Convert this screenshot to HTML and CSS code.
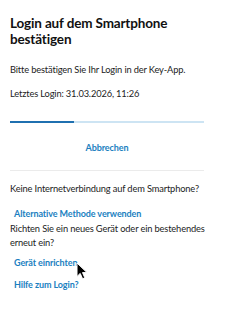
FILE: index.html
```html
<!DOCTYPE html>
<html lang="de">
<head>
<meta charset="utf-8">
<link rel="stylesheet" href="styles.css">
</head>
<body>
<div class="page">
  <h1 class="title">Login auf dem Smartphone bestätigen</h1>
  <p class="text first">Bitte bestätigen Sie Ihr Login in der Key-App.</p>
  <p class="text second">Letztes Login: 31.03.2026, 11:26</p>
  <div class="progress"><div class="progress-fill" style="width:33%"></div></div>
  <div class="cancel-row"><a class="link" href="#">Abbrechen</a></div>
  <div class="divider"></div>
  <p class="text q">Keine Internetverbindung auf dem Smartphone?</p>
  <a class="link indent alt" href="#">Alternative Methode verwenden</a>
  <p class="text q2">Richten Sie ein neues Gerät oder ein bestehendes erneut ein?</p>
  <div class="device-row">
    <a class="link indent" href="#">Gerät einrichten</a>
    <svg class="cursor" width="12" height="18" viewBox="0 0 12 18"><path d="M1 1 L1 14.5 L4.2 11.4 L6.6 16.8 L8.8 15.8 L6.5 10.6 L11 10.6 Z" fill="#000" stroke="#fff" stroke-width="1" stroke-linejoin="round"/></svg>
  </div>
  <a class="link indent help" href="#">Hilfe zum Login?</a>
</div>
</body>
</html>
```
FILE: styles.css
```css
html, body { margin: 0; padding: 0; background: #fff; }
body { font-family: Lato, "Noto Sans", sans-serif; color: #1c1c1c; }
.page { width: 194px; padding: 15px 10px 0 10px; display: flex; flex-direction: column; }
.title { font-size: 13.5px; line-height: 16px; font-weight: 700; margin: 0; color: #111; letter-spacing: -0.15px; }
.text { font-size: 9.3px; line-height: 14px; margin: 0; letter-spacing: -0.15px; }
.first { margin-top: 15.5px; }
.second { margin-top: 10px; }
.progress { height: 2px; background: #cde4f3; margin-top: 20.5px; }
.progress-fill { height: 100%; background: #1f70b0; }
.cancel-row { display: flex; justify-content: center; margin-top: 17.5px; }
.link { font-size: 9px; line-height: 14px; font-weight: 700; color: #1b7fbf; text-decoration: none; letter-spacing: -0.1px; }
.divider { height: 1px; background: #ebebeb; margin-top: 15.5px; }
.q { margin-top: 10.5px; }
.indent { margin-left: 4px; align-self: flex-start; }
.alt { margin-top: 11px; }
.q2 { margin-top: 1px; margin-right: -12px; }
.device-row { position: relative; display: flex; margin-top: 6px; }
.cursor { position: absolute; left: 66px; top: 6px; }
.help { margin-top: 8px; }
```
